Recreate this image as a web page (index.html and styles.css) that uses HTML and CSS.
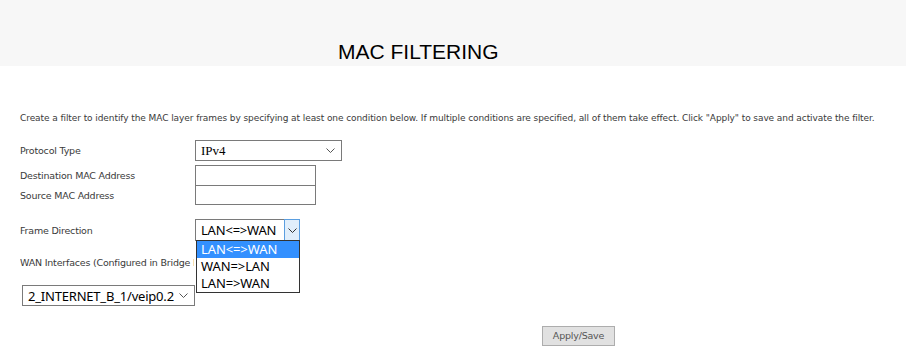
FILE: index.html
```html
<!DOCTYPE html>
<html lang="en">
<head>
  <meta charset="UTF-8" />
  <title>MAC Filtering</title>
  <link rel="stylesheet" href="styles.css">
</head>
<body>

  <div class="head">
    <h1 class="title">MAC FILTERING</h1>
  </div>

  <div class="content">
    <p class="intro">Create a filter to identify the MAC layer frames by specifying at least one condition below. If multiple conditions are specified, all of them take effect. Click "Apply" to save and activate the filter.</p>

    <div class="row row-proto">
      <span class="label">Protocol Type</span>
      <div class="select select-proto">
        <span class="value serif">IPv4</span>
        <svg class="chev" width="9" height="5" viewBox="0 0 9 5"><path d="M0.5 0.5 L4.5 4.5 L8.5 0.5" fill="none" stroke="#555" stroke-width="1"/></svg>
      </div>
    </div>

    <div class="row row-dest">
      <span class="label">Destination MAC Address</span>
      <input class="field" type="text">
    </div>
    <div class="row row-src">
      <span class="label">Source MAC Address</span>
      <input class="field" type="text">
    </div>

    <div class="row row-dir">
      <span class="label">Frame Direction</span>
      <div class="select select-dir">
        <span class="value">LAN&lt;=&gt;WAN</span>
        <span class="arrow-btn">
          <svg width="9" height="5" viewBox="0 0 9 5"><path d="M0.5 0.5 L4.5 4.5 L8.5 0.5" fill="none" stroke="#333" stroke-width="1"/></svg>
        </span>
        <!-- open list drawn over the next row -->
        <ul class="options">
          <li class="selected">LAN&lt;=&gt;WAN</li>
          <li>WAN=&gt;LAN</li>
          <li>LAN=&gt;WAN</li>
        </ul>
      </div>
    </div>

    <div class="row row-wan-label">
      <span class="label clip">WAN Interfaces (Configured in Bridge Mode only)</span>
    </div>

    <div class="row row-wan">
      <div class="select select-wan">
        <span class="value">2_INTERNET_B_1/veip0.2</span>
        <svg class="chev" width="9" height="5" viewBox="0 0 9 5"><path d="M0.5 0.5 L4.5 4.5 L8.5 0.5" fill="none" stroke="#555" stroke-width="1"/></svg>
      </div>
    </div>

    <div class="actions">
      <button class="btn" type="button">Apply/Save</button>
    </div>
  </div>

</body>
</html>
```

FILE: styles.css
```css
* {
  box-sizing: border-box;
}

body {
  margin: 0;
  background: #fff;
  font-family: "DejaVu Sans", Verdana, sans-serif;
  color: #3a3a3a;
}

.head {
  height: 66px;
  background: #f7f7f7;
  display: flex;
  align-items: flex-end;
  padding-left: 338px;
}

.title {
  margin: 0 0 3px;
  font-family: "Liberation Sans", Arial, sans-serif;
  font-weight: normal;
  font-size: 21px;
  line-height: 22px;
  color: #000;
}

.content {
  padding-left: 20px;
}

.intro {
  margin: 45px 0 0;
  font-size: 9px;
  line-height: 14px;
  letter-spacing: -0.08px;
  white-space: nowrap;
}

.row {
  display: flex;
  align-items: center;
}

.label {
  width: 175px;
  flex: none;
  font-size: 9.5px;
  letter-spacing: -0.2px;
  white-space: nowrap;
}

/* the open list covers the end of this label */
.label.clip {
  width: 174px;
  overflow: hidden;
}

.row-proto {
  margin-top: 15px;
  height: 21px;
}

.row-dest {
  margin-top: 4px;
  height: 21px;
}

.row-src {
  margin-top: -1px;
  height: 20px;
}

.row-dir {
  margin-top: 14px;
  height: 22px;
}

.row-wan-label {
  margin-top: 14px;
  height: 14px;
}

.row-wan {
  margin-top: 16px;
  height: 21px;
  padding-left: 2px;
}

.field {
  width: 121px;
  height: 100%;
  margin: 0;
  border: 1px solid #7a7a7a;
  background: #fff;
  border-radius: 0;
}

.select {
  position: relative;
  height: 100%;
  display: flex;
  align-items: center;
  border: 1px solid #7a7a7a;
  background: #fff;
  font-family: "Noto Sans", "Open Sans", sans-serif;
  font-size: 13px;
  color: #000;
}

.select .value {
  flex: 1;
  padding-left: 5px;
  white-space: nowrap;
}

.serif {
  font-family: "Liberation Serif", "Times New Roman", serif;
  font-size: 13px;
}

.chev {
  margin-right: 6px;
}

.select-proto {
  width: 147px;
}

.select-dir {
  width: 105px;
}

.select-dir .value {
  letter-spacing: -0.2px;
}

.arrow-btn {
  width: 16px;
  display: flex;
  align-items: center;
  justify-content: center;
  background: #e0eefb;
  border: 1px solid #5a9ee0;
  margin: -1px -1px -1px 0;
  height: calc(100% + 2px);
}

.options {
  position: absolute;
  top: 20px;
  left: 0;
  width: 104px;
  margin: 0;
  padding: 0;
  list-style: none;
  background: #fff;
  border: 1px solid #333;
  z-index: 2;
}

.options li {
  height: 17px;
  line-height: 17px;
  padding-left: 4px;
  letter-spacing: -0.1px;
  white-space: nowrap;
}

.options li.selected {
  background: #3390ff;
  color: #fff;
}

.select-wan {
  width: 173px;
}

.select-wan .value {
  letter-spacing: -0.2px;
}

.actions {
  margin-top: 18px;
  padding-left: 522px;
}

.btn {
  width: 73px;
  height: 20px;
  margin: 0;
  padding: 0;
  background: #e1e1e1;
  border: 1px solid #adadad;
  border-radius: 0;
  font-family: "DejaVu Sans", Verdana, sans-serif;
  font-size: 9.5px;
  letter-spacing: -0.2px;
  color: #555;
}
```
